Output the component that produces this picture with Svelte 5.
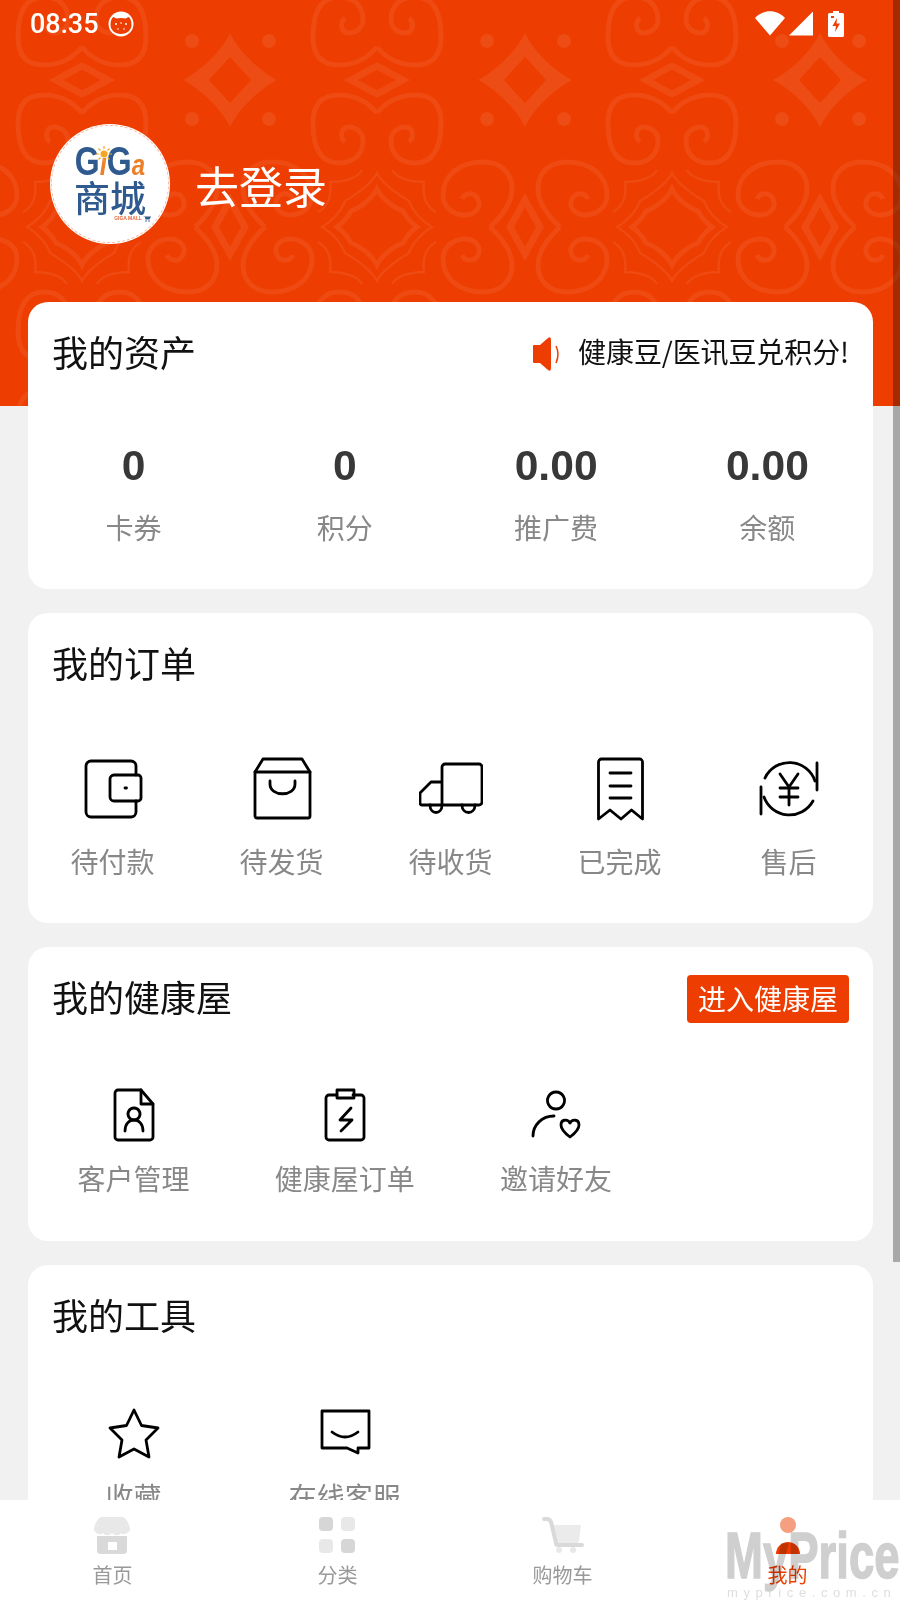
<script>
  // 个人中心页
  const stats = [
    { value: '0', label: '卡券' },
    { value: '0', label: '积分' },
    { value: '0.00', label: '推广费' },
    { value: '0.00', label: '余额' }
  ];

  const orders = [
    {
      label: '待付款',
      paths: [
        'M55 18V9a5 5 0 0 0-5-5H10a5 5 0 0 0-5 5v46a5 5 0 0 0 5 5h40a5 5 0 0 0 5-5V44',
        'M33 18h24a3 3 0 0 1 3 3v20a3 3 0 0 1-3 3H33a4 4 0 0 1-4-4V22a4 4 0 0 1 4-4z',
        'M44 31h1.500'
      ]
    },
    {
      label: '待发货',
      paths: [
        'M5 15h55v44a2 2 0 0 1-2 2H7a2 2 0 0 1-2-2z',
        'M5 15l8-13h39l8 13',
        'M20 24v3c0 13 25 13 25 0v-3'
      ]
    },
    {
      label: '待收货',
      paths: [
        'M23 48V10a3 3 0 0 1 3-3h34a3 3 0 0 1 3 3v35a3 3 0 0 1-3 3H23H3a2 2 0 0 1-2-2V36l11-11h11',
        'M11 48c0 10 12 10 12 0',
        'M43 48c0 10 13 10 13 0'
      ]
    },
    {
      label: '已完成',
      paths: [
        'M10.5 62V5a3 3 0 0 1 3-3h38a3 3 0 0 1 3 3v57l-11-9-10.500 9-11-9z',
        'M22 16h21',
        'M22 29h21',
        'M22 41h21'
      ]
    },
    {
      label: '售后',
      paths: [
        'M8 21A27 27 0 0 1 58 24',
        'M60 6v27',
        'M56 44A27 27 0 0 1 7 40',
        'M4 30v27',
        'M23 17l9 13 9-13',
        'M23 31h18',
        'M23 40h18',
        'M32 30v18'
      ]
    }
  ];

  const health = [
    {
      label: '客户管理',
      paths: [
        'M16 7h23l12 14v33a3 3 0 0 1-3 3H16a3 3 0 0 1-3-3V10a3 3 0 0 1 3-3z',
        'M39 7v14h12',
        'M32 25a6 6 0 1 0 .01 0z',
        'M23 48c0-7 4-11 9-11s9 4 9 11'
      ]
    },
    {
      label: '健康屋订单',
      paths: [
        'M24 12h-8a3 3 0 0 0-3 3v39a3 3 0 0 0 3 3h32a3 3 0 0 0 3-3V15a3 3 0 0 0-3-3h-8',
        'M24 7h17v8H24z',
        'M38 25L27 37h12L28 48'
      ]
    },
    {
      label: '邀请好友',
      paths: [
        'M32 9a8.500 8.500 0 1 0 .01 0z',
        'M9 53c0-11 9-20 21-20',
        'M46 40c-2-4-9-4-9 2 0 5 5 9 9 12 4-3 9-7 9-12 0-6-7-6-9-2z'
      ]
    }
  ];

  const tools = [
    {
      label: '收藏',
      paths: ['M32 8l7.500 15.500 16.500 2.500-12 12 3 17-15-8-15 8 3-17-12-12 16.500-2.500z']
    },
    {
      label: '在线客服',
      paths: ['M9 9h47v37H45v5l-11-5H9z', 'M19 30q13 10 26 0']
    }
  ];

  const cols = [-295, 0, 295, 590];
  const rows = [0, 295];
</script>

{#snippet lineIcon(paths)}
  <svg class="line-icon" viewBox="0 0 64 64" width="64" height="64">
    {#each paths as d}
      <path {d} />
    {/each}
  </svg>
{/snippet}

{#snippet title(text)}
  <h2>{text}</h2>
{/snippet}

<div class="page">
  <header class="hero">
    <svg class="pattern" width="900" height="406" viewBox="0 0 900 406">
      <defs>
        <g id="lobe-top">
          <path d="M0 18C-10 6-22 0-38 0-56 0-64 10-64 28-64 55-55 68-38 68-22 68-14 58-14 46-14 36-22 32-28 32-36 32-38 42-32 47" />
        </g>
        <g id="lobe-side">
          <path d="M35 0C22-12 13-25 13-38 13-55 25-65 42-65 65-65 82-52 82-32 82-20 72-12 60-12 50-12 43-20 47-28 50-35 60-35 63-28" />
        </g>
        <g id="corner">
          <path d="M-15-57C-20-48-35-45-47-45-45-30-50-20-59-15" stroke-width="2.500" />
        </g>
        <g id="tile">
          <!-- 上段 -->
          <g transform="translate(230 80)" class="solid">
            <path fill-rule="evenodd" d="M0-47C8-30 28-10 47 0 28 10 8 30 0 47-8 30-28 10-47 0-28-10-8-30 0-47zM0-23L-21 0 0 23 21 0z" />
            <circle cx="-38" cy="-39" r="7" />
            <circle cx="39" cy="-39" r="7" />
            <circle cx="-38" cy="39" r="7" />
            <circle cx="39" cy="39" r="7" />
          </g>
          <g transform="translate(377 95)">
            <use href="#lobe-top" />
            <use href="#lobe-top" transform="scale(-1 1)" />
          </g>
          <g transform="translate(377 65)">
            <use href="#lobe-top" transform="scale(1 -1)" />
            <use href="#lobe-top" transform="scale(-1 -1)" />
          </g>
          <path transform="translate(377 80)" d="M-26 0L0-14 26 0 0 14z" stroke-width="7" />
          <!-- 下段 -->
          <g transform="translate(230 227)">
            <use href="#lobe-side" />
            <use href="#lobe-side" transform="scale(-1 1)" />
            <use href="#lobe-side" transform="scale(1 -1)" />
            <use href="#lobe-side" transform="scale(-1 -1)" />
            <path d="M0-27L15 0 0 27-15 0z" stroke-width="7" />
          </g>
          <g transform="translate(377 227)">
            <path d="M0-38C6-26 20-18 26-16 30-8 36-3 40 0 36 3 30 8 26 16 20 18 6 26 0 38-6 26-20 18-26 16-30 8-36 3-40 0-36-3-30-8-26-16-20-18-6-26 0-38z" stroke-width="5" />
            <path d="M0-54C6-42 22-32 32-26 36-15 46-5 55 0 46 5 36 15 32 26 22 32 6 42 0 54-6 42-22 32-32 26-36 15-46 5-55 0-46-5-36-15-32-26-22-32-6-42 0-54z" stroke-width="2.500" />
            <use href="#corner" />
            <use href="#corner" transform="scale(-1 1)" />
            <use href="#corner" transform="scale(1 -1)" />
            <use href="#corner" transform="scale(-1 -1)" />
          </g>
        </g>
      </defs>
      {#each rows as y}
        {#each cols as x}
          <use href="#tile" {x} {y} />
        {/each}
      {/each}
    </svg>

    <div class="status">
      <div class="status-left">
        <span class="time">08:35</span>
        <svg width="26" height="26" viewBox="0 0 26 26">
          <circle cx="13" cy="13" r="12.500" fill="#fff" />
          <path d="M2.500 14c0-4 1-7 3-8l3 1.500c2.500-.8 6.500-.8 9 0l3-1.500c2 1 3 4 3 8 0 5-4.500 9-10.500 9S2.500 19 2.500 14z" fill="#ed3d00" />
          <circle cx="8" cy="13" r="1" fill="#fff" />
          <circle cx="18" cy="13" r="1" fill="#fff" />
          <circle cx="13" cy="12" r=".8" fill="#fff" />
          <circle cx="10" cy="18" r=".8" fill="#fff" />
          <circle cx="16" cy="18" r=".8" fill="#fff" />
        </svg>
      </div>
      <div class="status-right">
        <svg width="30" height="25" viewBox="0 0 30 25"><path d="M0 7C8-2 22-2 30 7L15 24.500z" fill="#fff" /></svg>
        <svg width="24" height="25" viewBox="0 0 24 25"><path d="M0 24.500L24 .5v24z" fill="#fff" /></svg>
        <svg class="battery" width="16" height="26" viewBox="0 0 16 26">
          <path d="M5 0h6v2h3.500a1.500 1.500 0 0 1 1.500 1.500v21a1.500 1.500 0 0 1-1.500 1.500h-13A1.500 1.500 0 0 1 0 24.500v-21A1.500 1.500 0 0 1 1.500 2H5z" fill="#fff" />
          <path d="M9 7L4.500 15H8l-1 6 5-8.500H8.500z" fill="#ed3d00" />
          <path d="M3 5h3v2H3z" fill="#ed3d00" />
        </svg>
      </div>
    </div>

    <div class="profile">
      <div class="avatar">
        <div class="ring"></div>
        <div class="brand">G<span class="i">i</span>G<span class="a">a</span></div>
        <svg class="sun" width="16" height="16" viewBox="0 0 16 16">
          <circle cx="8" cy="8" r="3.500" fill="#f5a623" />
          <path d="M8 0v3M8 13v3M0 8h3M13 8h3M2.500 2.500l2 2M11.500 11.500l2 2M13.500 2.500l-2 2M4.500 11.500l-2 2" stroke="#f5a623" stroke-width="1.200" />
        </svg>
        <div class="brand-cn">商城</div>
        <div class="brand-en">
          <span>GIGA MALL</span>
          <svg width="8" height="7" viewBox="0 0 8 7">
            <path d="M0 1h1.500l1 3.500h4L8 1.500H2z" fill="#2f5a8f" />
            <circle cx="3" cy="6" r=".8" fill="#2f5a8f" />
            <circle cx="6" cy="6" r=".8" fill="#2f5a8f" />
          </svg>
        </div>
      </div>
      <span class="login">去登录</span>
    </div>
  </header>

  <main class="content">
    <section class="card">
      <div class="card-head">
        {@render title('我的资产')}
        <div class="notice">
          <svg width="30" height="36" viewBox="0 0 30 36">
            <path d="M2 9h6L16 2q3-2 3 2v28q0 4-3 2L8 27H2a1 1 0 0 1-1-1V10a1 1 0 0 1 1-1z" fill="#ed3d00" />
            <path d="M24 10q4 8 0 17" fill="none" stroke="#ed3d00" stroke-width="1.500" />
          </svg>
          <span>健康豆/医讯豆兑积分!</span>
        </div>
      </div>
      <div class="stats">
        {#each stats as s}
          <div class="stat">
            <div class="stat-value">{s.value}</div>
            <div class="label">{s.label}</div>
          </div>
        {/each}
      </div>
    </section>

    <section class="card">
      <div class="card-head">{@render title('我的订单')}</div>
      <div class="grid five orders">
        {#each orders as item}
          <div class="cell">
            {@render lineIcon(item.paths)}
            <div class="label">{item.label}</div>
          </div>
        {/each}
      </div>
    </section>

    <section class="card">
      <div class="card-head">
        {@render title('我的健康屋')}
        <button class="enter">进入健康屋</button>
      </div>
      <div class="grid four">
        {#each health as item}
          <div class="cell">
            {@render lineIcon(item.paths)}
            <div class="label">{item.label}</div>
          </div>
        {/each}
      </div>
    </section>

    <section class="card">
      <div class="card-head">{@render title('我的工具')}</div>
      <div class="grid four tools">
        {#each tools as item}
          <div class="cell">
            {@render lineIcon(item.paths)}
            <div class="label">{item.label}</div>
          </div>
        {/each}
      </div>
    </section>
  </main>

  <div class="scrollbar"></div>

  <nav class="tabbar">
    <div class="tab">
      <svg class="nudge" width="40" height="40" viewBox="0 0 40 40">
        <path d="M5 21h30v14a4 4 0 0 1-4 4H9a4 4 0 0 1-4-4z" fill="#d9d9d9" />
        <path d="M16 27h9v8h-9z" fill="#fff" />
        <path d="M10 2h20c4 0 8 8 8 13-3 5-8 5-9 3-2 3-6 3-9 0-3 3-7 3-9 0-2 2-6 2-9-3 0-5 4-13 8-13z" fill="#e8e8e8" />
      </svg>
      <span>首页</span>
    </div>
    <div class="tab">
      <svg class="nudge" width="40" height="40" viewBox="0 0 40 40">
        <rect x="2" y="2" width="14" height="14" rx="4" fill="#d6d6d6" />
        <rect x="24" y="2" width="14" height="14" rx="4" fill="#e8e8e8" />
        <rect x="2" y="24" width="14" height="14" rx="4" fill="#e8e8e8" />
        <rect x="24" y="24" width="14" height="14" rx="4" fill="#d6d6d6" />
      </svg>
      <span>分类</span>
    </div>
    <div class="tab">
      <svg width="44" height="40" viewBox="0 0 44 40">
        <path d="M12 10h28l-2 16a2 2 0 0 1-2 2H15z" fill="#ebebeb" />
        <path d="M3 4h3c2 0 3 1 4 3l5 21a2 2 0 0 0 2 2h24" fill="none" stroke="#d9d9d9" stroke-width="4" stroke-linecap="round" />
        <circle cx="18" cy="35" r="3" fill="#e8e8e8" />
        <circle cx="32" cy="35" r="3" fill="#e8e8e8" />
      </svg>
      <span>购物车</span>
    </div>
    <div class="tab active">
      <svg width="40" height="40" viewBox="0 0 40 40">
        <circle cx="20" cy="10" r="8" fill="#f59f80" />
        <path d="M8 39a12 12 0 0 1 24 0z" fill="#ed3d00" />
      </svg>
      <span>我的</span>
    </div>
  </nav>

  <div class="watermark" aria-hidden="true">
    <div class="wm-big">MyPrice</div>
    <div class="wm-small">myprice.com.cn</div>
  </div>
</div>

<style>
  :global(body) {
    margin: 0;
    background: #f1f1f1;
  }
  .page {
    position: relative;
    width: 900px;
    height: 1600px;
    overflow: hidden;
    background: #f1f1f1;
    font-family: "Noto Sans CJK SC", "Noto Sans", sans-serif;
    color: #111;
  }

  .hero {
    position: relative;
    height: 406px;
    background: #ed3d00;
  }
  .pattern {
    position: absolute;
    inset: 0;
    fill: none;
    stroke: #ee4a12;
    stroke-width: 5;
  }
  .pattern :global(.solid) {
    fill: #ee4c15;
    stroke: none;
  }
  .status {
    position: relative;
    display: flex;
    justify-content: space-between;
    height: 47px;
    padding: 0 56px 0 30px;
    align-items: center;
    color: #fff;
  }
  .status-left,
  .status-right {
    display: flex;
    align-items: center;
  }
  .status-left {
    gap: 9px;
  }
  .status-right {
    gap: 4px;
  }
  .status-right svg {
    display: block;
  }
  .battery {
    margin-left: 11px;
  }
  .time {
    font-family: Roboto, sans-serif;
    font-size: 27px;
    font-weight: 500;
  }
  .profile {
    position: relative;
    display: flex;
    align-items: center;
    gap: 25px;
    margin: 77px 0 0 50px;
  }
  .avatar {
    position: relative;
    box-sizing: border-box;
    width: 120px;
    height: 120px;
    border-radius: 50%;
    background: #fff;
    display: flex;
    flex-direction: column;
    align-items: center;
    padding-top: 19px;
  }
  .ring {
    position: absolute;
    inset: 1px;
    border-radius: 50%;
    border: 1px dashed #f6b9a2;
  }
  .brand {
    font-family: "Liberation Sans", sans-serif;
    font-weight: 700;
    font-size: 40px;
    line-height: 36px;
    color: #2f5a8f;
    transform: scaleX(0.8);
    white-space: nowrap;
  }
  .brand .i {
    color: #ec7f2a;
    font-style: italic;
    font-size: 32px;
  }
  .brand .a {
    color: #ec7f2a;
    font-style: italic;
    font-size: 30px;
  }
  .sun {
    position: absolute;
    left: 46px;
    top: 22px;
  }
  .brand-cn {
    font-size: 36px;
    line-height: 36px;
    font-weight: 500;
    color: #2f5a8f;
    margin-top: -5px;
  }
  .brand-en {
    align-self: flex-end;
    display: flex;
    align-items: center;
    gap: 1px;
    margin: 1px 19px 0 0;
    font-family: "Liberation Sans", sans-serif;
    font-size: 5px;
    line-height: 7px;
    font-weight: 700;
    color: #e8683a;
  }
  .login {
    font-size: 44px;
    color: #fff;
    line-height: 60px;
    margin-top: 2px;
  }

  .content {
    position: relative;
    margin-top: -104px;
    padding: 0 27px 0 28px;
    display: flex;
    flex-direction: column;
    gap: 24px;
  }
  .card {
    background: #fff;
    border-radius: 20px;
  }
  .card-head {
    height: 102px;
    padding: 0 24px;
    display: flex;
    align-items: center;
    justify-content: space-between;
  }
  h2 {
    margin: 0 0 5px;
    font-size: 36px;
    line-height: 50px;
    font-weight: 400;
    color: #111;
  }
  .notice {
    display: flex;
    align-items: center;
    gap: 16px;
    font-size: 28px;
    line-height: 40px;
    letter-spacing: -0.1px;
  }
  .notice span {
    margin-bottom: 4px;
  }
  .notice svg {
    display: block;
    margin-top: 1px;
  }
  .enter {
    width: 162px;
    height: 48px;
    margin-top: 2px;
    padding: 0 0 2px;
    border: none;
    border-radius: 4px;
    background: #ed3d00;
    color: #fff;
    font: inherit;
    font-size: 28px;
    line-height: 46px;
  }

  .label {
    font-size: 28px;
    line-height: 40px;
    color: #888;
    text-align: center;
  }
  .stats {
    display: grid;
    grid-template-columns: repeat(4, 1fr);
    padding: 36px 0 42px;
  }
  .stat-value {
    font-family: "Liberation Sans", sans-serif;
    font-size: 42.6px;
    font-weight: 700;
    line-height: 50px;
    color: #383838;
    text-align: center;
    margin-bottom: 17px;
  }

  .grid {
    display: grid;
    padding: 34px 0 43px;
  }
  .five {
    grid-template-columns: repeat(5, 1fr);
  }
  .four {
    grid-template-columns: repeat(4, 1fr);
  }
  .orders {
    padding: 42px 0 42px;
  }
  .orders .cell {
    gap: 20px;
  }
  .tools {
    padding-top: 35px;
  }
  .cell {
    display: flex;
    flex-direction: column;
    align-items: center;
    gap: 11px;
  }
  .tools .cell {
    gap: 10px;
  }
  .line-icon {
    display: block;
    fill: none;
    stroke: #000;
    stroke-width: 2.800;
    stroke-linecap: round;
    stroke-linejoin: round;
  }

  .scrollbar {
    position: absolute;
    top: 0;
    right: 0;
    width: 7px;
    height: 1262px;
    background: rgba(0, 0, 0, 0.3);
  }

  .tabbar {
    position: absolute;
    left: 0;
    right: 0;
    bottom: 0;
    height: 100px;
    background: #fff;
    display: grid;
    grid-template-columns: repeat(4, 225px);
  }
  .tab {
    display: flex;
    flex-direction: column;
    align-items: center;
    padding-top: 15px;
    color: #999;
    font-size: 20px;
    line-height: 28px;
  }
  .tab svg {
    display: block;
    margin-bottom: 6px;
  }
  .tab svg.nudge {
    margin-left: -2px;
  }
  .tab.active {
    color: #ed3d00;
  }

  .watermark {
    position: absolute;
    left: 725px;
    top: 1525px;
    width: 175px;
    overflow: hidden;
    pointer-events: none;
    color: #cfcfcf;
    mix-blend-mode: multiply;
  }
  .wm-big {
    font-family: "Liberation Sans", sans-serif;
    font-weight: 700;
    font-size: 65px;
    line-height: 61px;
    -webkit-text-stroke: 1.5px #cfcfcf;
    transform: scaleX(0.7);
    transform-origin: left;
    white-space: nowrap;
    width: 260px;
  }
  .wm-small {
    font-family: "Liberation Sans", sans-serif;
    font-size: 13px;
    line-height: 14px;
    letter-spacing: 5.600px;
    white-space: nowrap;
    margin-left: 2px;
    color: #dedede;
  }
</style>
